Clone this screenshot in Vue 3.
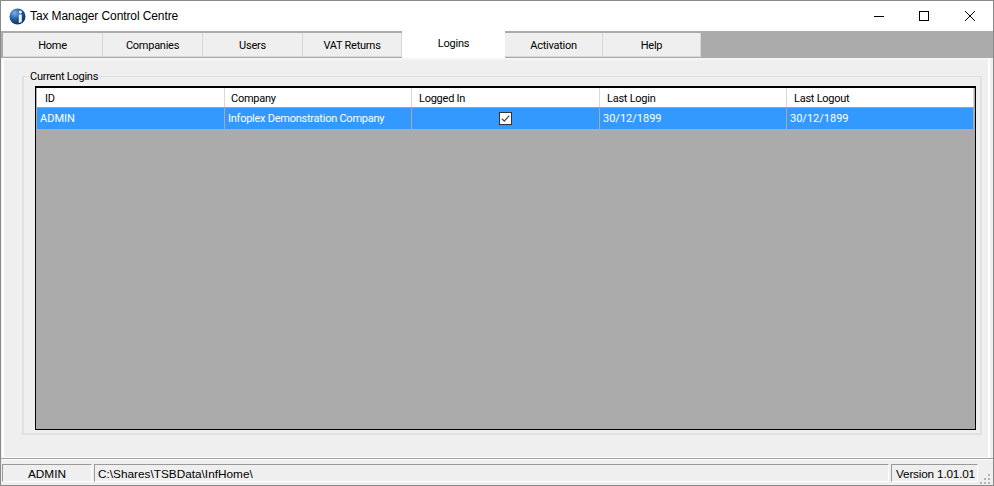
<script setup>
const tabs = [
  { label: 'Home', w: 100 },
  { label: 'Companies', w: 100 },
  { label: 'Users', w: 100 },
  { label: 'VAT Returns', w: 99 },
  { label: 'Logins', w: 103, active: true },
  { label: 'Activation', w: 98 },
  { label: 'Help', w: 98 },
]
const cols = [
  { label: 'ID', w: 188, pad: 8 },
  { label: 'Company', w: 187, pad: 6 },
  { label: 'Logged In', w: 188, pad: 7 },
  { label: 'Last Login', w: 187, pad: 7 },
  { label: 'Last Logout', w: 187, pad: 7 },
]
const cells = ['ADMIN', 'Infoplex Demonstration Company', null, '30/12/1899', '30/12/1899']
</script>

<template>
  <div class="window">
    <header class="titlebar">
      <svg class="logo" width="17" height="17" viewBox="0 0 17 17">
        <defs>
          <radialGradient id="orb" cx="32%" cy="28%" r="80%">
            <stop offset="0" stop-color="#7db0e6" />
            <stop offset="0.5" stop-color="#1f5c9e" />
            <stop offset="1" stop-color="#0b2a55" />
          </radialGradient>
        </defs>
        <circle cx="8.5" cy="8.5" r="8" fill="url(#orb)" />
        <circle cx="11.3" cy="4" r="1.5" fill="#e8f2fb" />
        <path d="M9.8 6.6h3v7.4l-3 1z" fill="#e8f2fb" />
      </svg>
      <span class="title">Tax Manager Control Centre</span>
      <div class="controls">
        <svg width="12" height="12" viewBox="0 0 12 12"><path d="M1 6.5h10" stroke="#000" fill="none" /></svg>
        <svg width="12" height="12" viewBox="0 0 12 12"><rect x="1.5" y="1.5" width="9" height="9" stroke="#000" fill="none" /></svg>
        <svg width="12" height="12" viewBox="0 0 12 12"><path d="M1 1l10 10M11 1L1 11" stroke="#000" fill="none" /></svg>
      </div>
    </header>

    <nav class="tabs">
      <div
        v-for="t in tabs"
        :key="t.label"
        class="tab"
        :class="{ active: t.active }"
        :style="{ width: t.w + 'px' }"
      >{{ t.label }}</div>
    </nav>

    <main class="panel">
      <fieldset class="group">
        <legend>Current Logins</legend>
        <div class="grid">
          <div class="row head">
            <div
              v-for="c in cols"
              :key="c.label"
              class="hcell"
              :style="{ width: c.w + 'px', paddingLeft: c.pad + 'px' }"
            >{{ c.label }}</div>
          </div>
          <div class="row sel">
            <div
              v-for="(c, i) in cols"
              :key="c.label"
              class="cell"
              :class="{ center: i === 2, plain: i !== 1 }"
              :style="{ width: c.w + 'px' }"
            >
              <template v-if="cells[i]">{{ cells[i] }}</template>
              <svg v-else width="13" height="13" viewBox="0 0 13 13">
                <rect x="0.5" y="0.5" width="12" height="12" fill="#fff" stroke="#333" />
                <path d="M2.8 6.6l2.5 2.5L10.2 3.6" fill="none" stroke="#444" stroke-width="1.3" />
              </svg>
            </div>
          </div>
        </div>
      </fieldset>
    </main>

    <footer class="status">
      <div class="sb user">ADMIN</div>
      <div class="sb path">C:\Shares\TSBData\InfHome\</div>
      <div class="sb ver">Version 1.01.01</div>
      <svg class="grip" width="10" height="10" viewBox="0 0 10 10" fill="#b4b4b4">
        <rect x="8" y="0" width="2" height="2" />
        <rect x="4" y="4" width="2" height="2" /><rect x="8" y="4" width="2" height="2" />
        <rect x="0" y="8" width="2" height="2" /><rect x="4" y="8" width="2" height="2" /><rect x="8" y="8" width="2" height="2" />
      </svg>
    </footer>
  </div>
</template>

<style scoped>
.window {
  width: 994px;
  height: 486px;
  box-sizing: border-box;
  border: 1px solid #8a8a8a;
  background: #efefef;
  display: flex;
  flex-direction: column;
  font-family: Roboto, "Liberation Sans", sans-serif;
  font-size: 11px;
  letter-spacing: -0.25px;
  color: #000;
  overflow: hidden;
}
.titlebar {
  height: 30px;
  flex: none;
  background: #fff;
  display: flex;
  align-items: center;
  padding-left: 8px;
}
.logo { flex: none; }
.title {
  margin-left: 4px;
  font-family: "Liberation Sans", sans-serif;
  font-size: 12px;
  letter-spacing: -0.1px;
}
.controls {
  margin-left: auto;
  display: flex;
  gap: 33px;
  padding-right: 17px;
}
.controls svg:first-child { margin-left: -1px; }
.controls svg:last-child { margin-left: 1px; }
.tabs {
  height: 27px;
  flex: none;
  background: #ababab;
  display: flex;
  padding: 2px 0 0 2px;
  box-sizing: border-box;
}
.tab {
  box-sizing: border-box;
  height: 24px;
  background: #efefef;
  border-right: 1px solid #d8d8d8;
  border-bottom: 1px solid #d8d8d8;
  display: flex;
  align-items: center;
  justify-content: center;
  padding-top: 2px;
}
.tab.active {
  background: #fff;
  margin-top: -2px;
  padding: 0 0 2px;
  height: 27px;
  border: none;
}
.panel {
  flex: 1;
  margin: 0 3px 0 1px;
  border: 2px solid #fff;
  border-bottom-width: 1px;
  border-top-color: #f5f5f5;
  padding: 9px 6px 0 18px;
  box-sizing: border-box;
  min-height: 0;
}
.group {
  margin: 0;
  height: 366px;
  box-sizing: border-box;
  border: 2px solid #e0e0e0;
  border-top-width: 1px;
  padding: 0 4px 0 11px;
}
.group legend {
  padding: 0 1px;
  margin-left: -6px;
  line-height: 15px;
}
.grid {
  height: 344px;
  box-sizing: border-box;
  margin-top: 2px;
  background: #ababab;
  border: 1px solid #000;
  border-top-width: 2px;
  padding: 0 1px;
  display: flex;
  flex-direction: column;
}
.row { display: flex; flex: none; }
.head { height: 20px; background: #fff; border-bottom: 1px solid #a0a0a0; box-sizing: border-box; }
.hcell {
  box-sizing: border-box;
  border-right: 1px solid #d9d9d9;
  line-height: 21px;
  flex: none;
}
.sel { height: 21px; background: #3399ff; color: #fff; }
.cell {
  box-sizing: border-box;
  padding-left: 3px;
  border-right: 1px solid #a9a9a9;
  line-height: 21px;
  flex: none;
  display: flex;
  align-items: center;
}
.cell.plain { letter-spacing: 0; }
.cell.center { justify-content: center; padding-left: 0; }
.status {
  height: 27px;
  flex: none;
  box-sizing: border-box;
  border-top: 1px solid #a0a0a0;
  background: #efefef;
  box-shadow: inset 0 1px 0 #fff;
  display: flex;
  align-items: flex-start;
  padding: 5px 0 0 1px;
  position: relative;
  font-family: "Liberation Sans", sans-serif;
  font-size: 11.8px;
  letter-spacing: 0;
}
.sb {
  height: 18px;
  box-sizing: border-box;
  line-height: 18px;
  border-top: 1px solid #9a9a9a;
  border-left: 1px solid #9a9a9a;
  border-right: 1px solid #fff;
  border-bottom: 1px solid #fff;
  margin-right: 2px;
  white-space: nowrap;
  flex: none;
}
.user { width: 90px; text-align: center; }
.path { width: 795px; padding-left: 3px; }
.ver { width: 87px; text-align: center; margin-right: 0; letter-spacing: -0.2px; padding-left: 2px; }
.grip { position: absolute; right: 3px; bottom: 1px; }
</style>
